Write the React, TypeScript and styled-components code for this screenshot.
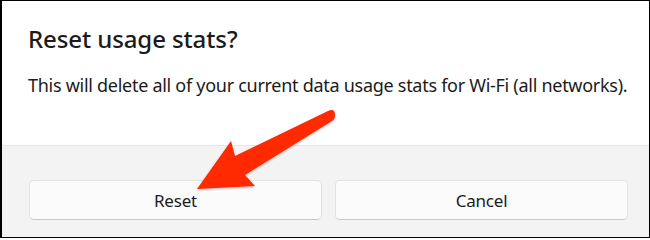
import styled, { createGlobalStyle } from "styled-components";

const GlobalStyle = createGlobalStyle`
  html, body {
    margin: 0;
    padding: 0;
    background: #ffffff;
  }
  body {
    font-family: "Noto Sans", "Segoe UI", "Liberation Sans", sans-serif;
    color: #1b1b1b;
  }
`;

const Dialog = styled.div`
  position: relative;
  box-sizing: border-box;
  width: 650px;
  height: 238px;
  display: flex;
  flex-direction: column;
  border-style: solid;
  border-color: #000;
  border-width: 1px 1px 1px 2px;
  overflow: hidden;
`;

const Content = styled.div`
  height: 145px;
  box-sizing: border-box;
  padding: 21px 20px 0 26px;
  background: #ffffff;
  border-bottom: 1px solid #e5e5e5;
`;

const Title = styled.h2`
  margin: 0;
  font-size: 24px;
  font-weight: 500;
  line-height: 34px;
  letter-spacing: -0.1px;
`;

const Body = styled.p`
  margin: 17px 0 0;
  font-size: 18px;
  line-height: 24px;
  letter-spacing: -0.28px;
  white-space: nowrap;
`;

const Footer = styled.div`
  flex: 1;
  display: grid;
  grid-template-columns: 1fr 1fr;
  gap: 13px;
  padding: 34px 21px 0 27px;
  align-items: start;
  background: #f3f3f3;
`;

const Button = styled.button`
  height: 40px;
  border: 1px solid #e3e3e3;
  border-bottom-color: #c9c9c9;
  border-radius: 5px;
  background: #fbfbfb;
  font-family: inherit;
  font-size: 17px;
  color: #1b1b1b;
  letter-spacing: -0.2px;
  cursor: pointer;
`;

const Arrow = styled.svg`
  position: absolute;
  left: 0;
  top: 0;
  width: 650px;
  height: 238px;
  pointer-events: none;
`;

export default function App() {
  return (
    <>
      <GlobalStyle />
      <Dialog>
        <Content>
          <Title>Reset usage stats?</Title>
          <Body>
            This will delete all of your current data usage stats for Wi-Fi
            (all networks).
          </Body>
        </Content>
        <Footer>
          <Button>Reset</Button>
          <Button>Cancel</Button>
        </Footer>
        <Arrow viewBox="0 0 650 238">
          <defs>
            <filter id="sh" x="-20%" y="-20%" width="140%" height="140%">
              <feDropShadow dx="0" dy="1" stdDeviation="1" floodColor="#000" floodOpacity="0.25" />
            </filter>
          </defs>
          <path
            d="M195 188 L229 140 L233 155 L326 110 Q333 107 333 114 Q333 118 330 120 L243 174 L253 185 Z"
            fill="#ff2a00"
            filter="url(#sh)"
          />
        </Arrow>
      </Dialog>
    </>
  );
}
